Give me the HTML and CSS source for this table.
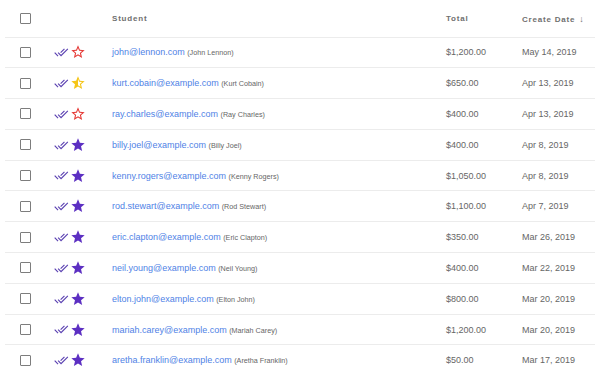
FILE: index.html
```html
<!DOCTYPE html>
<html lang="en">
  <head>
    <meta charset="UTF-8" />
    <meta name="viewport" content="width=device-width, initial-scale=1" />
    <title>Orders</title>
    <link rel="stylesheet" href="styles.css">
  </head>
  <body>
    <svg class="defs" aria-hidden="true">
      <symbol id="done-all" viewBox="0 0 24 24">
        <path d="M18 7l-1.41-1.41-6.34 6.34 1.41 1.41L18 7zm4.24-1.41L11.66 16.17 7.48 12l-1.41 1.41L11.66 19l12-12-1.42-1.41zM.41 13.41L6 19l1.41-1.41L1.83 12 .41 13.41z" />
      </symbol>
      <symbol id="star" viewBox="0 0 24 24">
        <path d="M12 17.27L18.18 21l-1.64-7.03L22 9.24l-7.19-.61L12 2 9.19 8.63 2 9.24l5.46 4.73L5.82 21z" />
      </symbol>
      <symbol id="star-border" viewBox="0 0 24 24">
        <path d="M22 9.24l-7.19-.62L12 2 9.19 8.63 2 9.24l5.46 4.73L5.82 21 12 17.27 18.18 21l-1.63-7.03L22 9.24zM12 15.4l-3.76 2.27 1-4.28-3.32-2.88 4.38-.38L12 6.1l1.71 4.04 4.38.38-3.32 2.88 1 4.28L12 15.4z" />
      </symbol>
      <symbol id="star-half" viewBox="0 0 24 24">
        <path d="M22 9.24l-7.19-.62L12 2 9.19 8.63 2 9.24l5.46 4.73L5.82 21 12 17.27 18.18 21l-1.63-7.03L22 9.24zM12 15.4V6.1l1.71 4.04 4.38.38-3.32 2.88 1 4.28L12 15.4z" />
      </symbol>
    </svg>

    <table class="orders">
      <colgroup>
        <col class="col-check" />
        <col class="col-icons" />
        <col class="col-student" />
        <col class="col-total" />
        <col class="col-date" />
      </colgroup>
      <thead>
        <tr>
          <th class="cell-check"><input type="checkbox" class="box" /></th>
          <th></th>
          <th>Student</th>
          <th>Total</th>
          <th>Create Date <span class="sort">&#8595;</span></th>
        </tr>
      </thead>
      <tbody>
        <tr>
          <td class="cell-check"><input type="checkbox" class="box" /></td>
          <td class="icons"><svg class="check"><use href="#done-all" /></svg><svg class="star red"><use href="#star-border" /></svg></td>
          <td><a href="#" class="email">john@lennon.com</a> <span class="name">(John Lennon)</span></td>
          <td>$1,200.00</td>
          <td>May 14, 2019</td>
        </tr>
        <tr>
          <td class="cell-check"><input type="checkbox" class="box" /></td>
          <td class="icons"><svg class="check"><use href="#done-all" /></svg><svg class="star yellow"><use href="#star-half" /></svg></td>
          <td><a href="#" class="email">kurt.cobain@example.com</a> <span class="name">(Kurt Cobain)</span></td>
          <td>$650.00</td>
          <td>Apr 13, 2019</td>
        </tr>
        <tr>
          <td class="cell-check"><input type="checkbox" class="box" /></td>
          <td class="icons"><svg class="check"><use href="#done-all" /></svg><svg class="star red"><use href="#star-border" /></svg></td>
          <td><a href="#" class="email">ray.charles@example.com</a> <span class="name">(Ray Charles)</span></td>
          <td>$400.00</td>
          <td>Apr 13, 2019</td>
        </tr>
        <tr>
          <td class="cell-check"><input type="checkbox" class="box" /></td>
          <td class="icons"><svg class="check"><use href="#done-all" /></svg><svg class="star purple"><use href="#star" /></svg></td>
          <td><a href="#" class="email">billy.joel@example.com</a> <span class="name">(Billy Joel)</span></td>
          <td>$400.00</td>
          <td>Apr 8, 2019</td>
        </tr>
        <tr>
          <td class="cell-check"><input type="checkbox" class="box" /></td>
          <td class="icons"><svg class="check"><use href="#done-all" /></svg><svg class="star purple"><use href="#star" /></svg></td>
          <td><a href="#" class="email">kenny.rogers@example.com</a> <span class="name">(Kenny Rogers)</span></td>
          <td>$1,050.00</td>
          <td>Apr 8, 2019</td>
        </tr>
        <tr>
          <td class="cell-check"><input type="checkbox" class="box" /></td>
          <td class="icons"><svg class="check"><use href="#done-all" /></svg><svg class="star purple"><use href="#star" /></svg></td>
          <td><a href="#" class="email">rod.stewart@example.com</a> <span class="name">(Rod Stewart)</span></td>
          <td>$1,100.00</td>
          <td>Apr 7, 2019</td>
        </tr>
        <tr>
          <td class="cell-check"><input type="checkbox" class="box" /></td>
          <td class="icons"><svg class="check"><use href="#done-all" /></svg><svg class="star purple"><use href="#star" /></svg></td>
          <td><a href="#" class="email">eric.clapton@example.com</a> <span class="name">(Eric Clapton)</span></td>
          <td>$350.00</td>
          <td>Mar 26, 2019</td>
        </tr>
        <tr>
          <td class="cell-check"><input type="checkbox" class="box" /></td>
          <td class="icons"><svg class="check"><use href="#done-all" /></svg><svg class="star purple"><use href="#star" /></svg></td>
          <td><a href="#" class="email">neil.young@example.com</a> <span class="name">(Neil Young)</span></td>
          <td>$400.00</td>
          <td>Mar 22, 2019</td>
        </tr>
        <tr>
          <td class="cell-check"><input type="checkbox" class="box" /></td>
          <td class="icons"><svg class="check"><use href="#done-all" /></svg><svg class="star purple"><use href="#star" /></svg></td>
          <td><a href="#" class="email">elton.john@example.com</a> <span class="name">(Elton John)</span></td>
          <td>$800.00</td>
          <td>Mar 20, 2019</td>
        </tr>
        <tr>
          <td class="cell-check"><input type="checkbox" class="box" /></td>
          <td class="icons"><svg class="check"><use href="#done-all" /></svg><svg class="star purple"><use href="#star" /></svg></td>
          <td><a href="#" class="email">mariah.carey@example.com</a> <span class="name">(Mariah Carey)</span></td>
          <td>$1,200.00</td>
          <td>Mar 20, 2019</td>
        </tr>
        <tr>
          <td class="cell-check"><input type="checkbox" class="box" /></td>
          <td class="icons"><svg class="check"><use href="#done-all" /></svg><svg class="star purple"><use href="#star" /></svg></td>
          <td><a href="#" class="email">aretha.franklin@example.com</a> <span class="name">(Aretha Franklin)</span></td>
          <td>$50.00</td>
          <td>Mar 17, 2019</td>
        </tr>
      </tbody>
    </table>
  </body>
</html>
```

FILE: styles.css
```css
* {
  box-sizing: border-box;
  margin: 0;
  padding: 0;
}

body {
  font-family: 'Liberation Sans', Arial, sans-serif;
  background: #fff;
  color: #666;
  padding: 0 5px;
}

.defs {
  display: none;
}

.orders {
  width: 590px;
  table-layout: fixed;
  border-collapse: collapse;
}

.col-check { width: 49px; }
.col-icons { width: 58px; }
.col-student { width: 334px; }
.col-total { width: 76px; }
.col-date { width: 73px; }

th,
td {
  text-align: left;
  vertical-align: middle;
  white-space: nowrap;
  border-bottom: 1px solid #ececec;
}

th {
  height: 37px;
  font-size: 8px;
  font-weight: 700;
  letter-spacing: 0.8px;
  color: #707070;
  padding-top: 1px;
}

td {
  height: 30.8px;
  font-size: 9px;
  color: #666;
}

.cell-check {
  padding-left: 15px;
}

.box {
  appearance: none;
  display: block;
  width: 11px;
  height: 11px;
  border: 1.5px solid #7d7d7d;
  border-radius: 1px;
  background: #fff;
}

.sort {
  font-size: 9px;
  font-weight: 400;
  letter-spacing: 0;
  margin-left: 1px;
}

.icons {
  line-height: 0;
}

.icons svg {
  vertical-align: middle;
}

.check {
  width: 14.5px;
  height: 14.5px;
  fill: #5e45b3;
}

.star {
  width: 16px;
  height: 16px;
  margin-left: 1px;
}

.star.red { fill: #e53935; }
.star.yellow { fill: #f5c518; }
.star.purple { fill: #5c2fc2; }

.email {
  color: #4f82e6;
  text-decoration: none;
}

.name {
  font-size: 7.2px;
  color: #666;
}
```
